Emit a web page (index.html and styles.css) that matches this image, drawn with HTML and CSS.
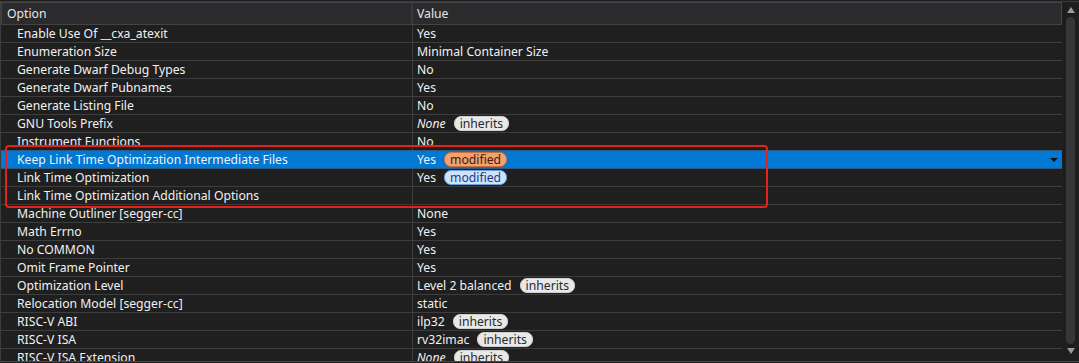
FILE: index.html
```html
<!DOCTYPE html>
<html lang="en">
<head>
    <meta charset="UTF-8">
    <title>Options</title>
    <link rel="stylesheet" href="styles.css">
</head>
<body>
    <div class="frame">
        <div class="grid">
            <div class="head">
                <div class="cell opt">Option</div>
                <div class="cell val">Value</div>
            </div>
            <div class="row"><div class="cell opt">Enable Use Of __cxa_atexit</div><div class="cell val">Yes</div></div>
            <div class="row"><div class="cell opt">Enumeration Size</div><div class="cell val">Minimal Container Size</div></div>
            <div class="row"><div class="cell opt">Generate Dwarf Debug Types</div><div class="cell val">No</div></div>
            <div class="row"><div class="cell opt">Generate Dwarf Pubnames</div><div class="cell val">Yes</div></div>
            <div class="row"><div class="cell opt">Generate Listing File</div><div class="cell val">No</div></div>
            <div class="row"><div class="cell opt">GNU Tools Prefix</div><div class="cell val"><i>None</i><span class="pill">inherits</span></div></div>
            <div class="row"><div class="cell opt">Instrument Functions</div><div class="cell val">No</div></div>
            <div class="row selected"><div class="cell opt">Keep Link Time Optimization Intermediate Files</div><div class="cell val">Yes<span class="pill orange">modified</span><span class="caret"></span></div></div>
            <div class="row"><div class="cell opt">Link Time Optimization</div><div class="cell val">Yes<span class="pill blue">modified</span></div></div>
            <div class="row"><div class="cell opt">Link Time Optimization Additional Options</div><div class="cell val"></div></div>
            <div class="row"><div class="cell opt">Machine Outliner [segger-cc]</div><div class="cell val">None</div></div>
            <div class="row"><div class="cell opt">Math Errno</div><div class="cell val">Yes</div></div>
            <div class="row"><div class="cell opt">No COMMON</div><div class="cell val">Yes</div></div>
            <div class="row"><div class="cell opt">Omit Frame Pointer</div><div class="cell val">Yes</div></div>
            <div class="row"><div class="cell opt">Optimization Level</div><div class="cell val">Level 2 balanced<span class="pill">inherits</span></div></div>
            <div class="row"><div class="cell opt">Relocation Model [segger-cc]</div><div class="cell val">static</div></div>
            <div class="row"><div class="cell opt">RISC-V ABI</div><div class="cell val">ilp32<span class="pill">inherits</span></div></div>
            <div class="row"><div class="cell opt">RISC-V ISA</div><div class="cell val">rv32imac<span class="pill">inherits</span></div></div>
            <div class="row"><div class="cell opt">RISC-V ISA Extension</div><div class="cell val"><i>None</i><span class="pill">inherits</span></div></div>
        </div>
        <div class="scrollbar">
            <span class="arrow up"></span>
            <div class="thumb"></div>
            <span class="arrow down"></span>
        </div>
        <div class="highlight"></div>
    </div>
</body>
</html>
```

FILE: styles.css
```css
body {
    margin: 0;
    background-color: #1e1e1e;
    font-family: "Noto Sans", "Open Sans", sans-serif;
    font-size: 12.2px;
    color: #f1f1f1;
    overflow: hidden;
}
.frame {
    position: relative;
    display: flex;
    height: 359px;
    margin-top: 1px;
    border-top: 1px solid #3c3c3c;
    border-bottom: 1px solid #4a4a4a;
    border-left: 1px solid #3c3c3c;
    overflow: hidden;
}
.grid {
    width: 1061px;
    display: flex;
    flex-direction: column;
    overflow: hidden;
}
.head {
    display: flex;
    flex: none;
    height: 21px;
    background-color: #2b2b2d;
    border: 1px solid #444446;
    color: #e6e6e6;
}
.head .opt {
    width: 411px;
    padding-left: 5px;
    border-right: 2px solid #39393b;
}
.row {
    display: flex;
    flex: none;
    height: 17px;
    border-bottom: 1px solid #3d3d3d;
    background-color: #1f1f1f;
}
.cell {
    display: flex;
    align-items: center;
    white-space: nowrap;
    overflow: hidden;
}
.opt {
    box-sizing: border-box;
    width: 412px;
    flex: none;
    padding-left: 16px;
    border-right: 1px solid #3d3d3d;
}
.val {
    flex: 1;
    padding-left: 4px;
    position: relative;
}
.val i {
    font-style: italic;
}
.row.selected {
    background-color: #0078d4;
    border-top: 1px solid #2d5a80;
    border-bottom: 1px solid #2d5a80;
    margin-top: -1px;
    position: relative;
    z-index: 1;
}
.row.selected .opt {
    border-right-color: #0078d4;
}
.pill {
    display: inline-block;
    margin-left: 8px;
    padding: 0 5px;
    height: 15px;
    line-height: 13px;
    border-radius: 7px;
    background-color: #e8e8e8;
    color: #2a2a2a;
    box-sizing: border-box;
    border: 1px solid #d0d0d0;
}
.pill.orange {
    background-color: #f2a272;
    border-color: #c8703c;
    color: #3a1c08;
}
.pill.blue {
    background-color: #cfe2fc;
    border-color: #6a9fe0;
    color: #1c3c7c;
}
.caret {
    position: absolute;
    right: 4px;
    top: 7px;
    border-left: 4px solid transparent;
    border-right: 4px solid transparent;
    border-top: 4px solid #101010;
}
.scrollbar {
    width: 17px;
    display: flex;
    flex-direction: column;
    align-items: center;
    background-color: #1e1e1e;
    padding-top: 5px;
}
.arrow {
    width: 0;
    height: 0;
    border-left: 4px solid transparent;
    border-right: 4px solid transparent;
}
.arrow.up {
    border-bottom: 6px solid #9a9a9a;
}
.arrow.down {
    border-top: 6px solid #9a9a9a;
    margin-top: 4px;
}
.thumb {
    width: 9px;
    height: 327px;
    margin-top: 4px;
    border-radius: 5px;
    background-color: #36363a;
}
.highlight {
    position: absolute;
    left: 4px;
    top: 143px;
    width: 759px;
    height: 59px;
    border: 2px solid #e3231c;
    border-radius: 4px;
    z-index: 2;
}
```
